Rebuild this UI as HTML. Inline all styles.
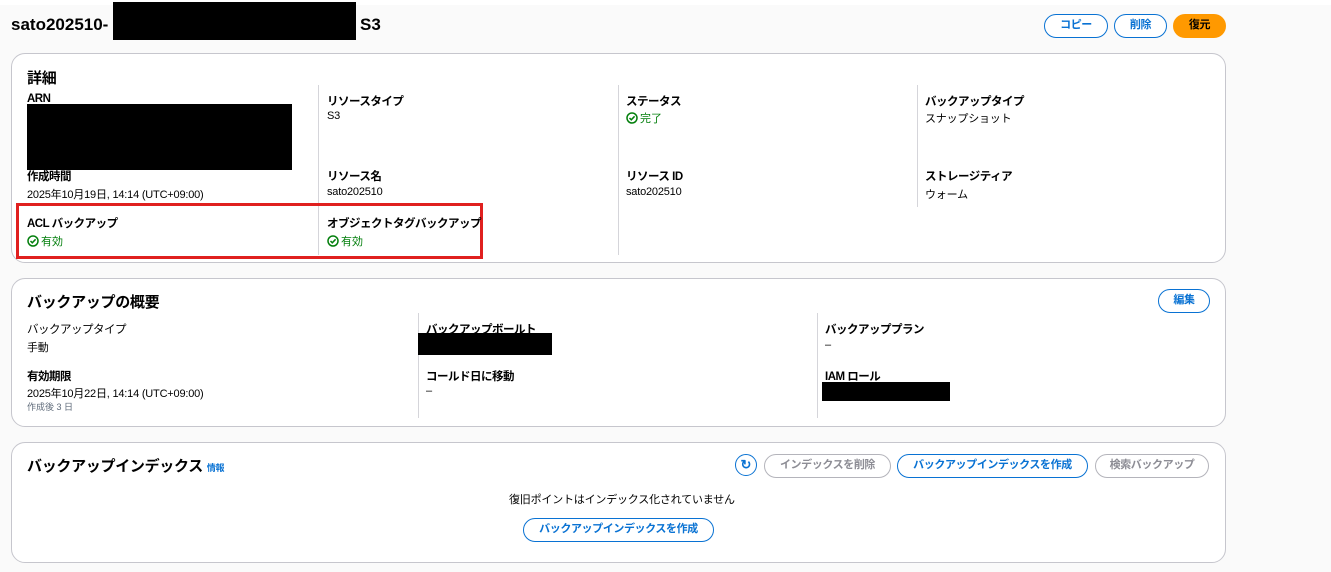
<!DOCTYPE html>
<html><head><meta charset="utf-8"><style>
*{margin:0;padding:0;box-sizing:border-box}
body{width:1331px;height:572px;background:#fff;font-family:"Liberation Sans","Noto Sans CJK JP",sans-serif;color:#000;position:relative;overflow:hidden}
.bg{position:absolute;left:0;top:5px;width:1331px;height:567px;background:#fafafa}
.a{position:absolute;white-space:nowrap}
.panel{position:absolute;left:11px;width:1215px;background:#fff;border:1px solid #c6c6cd;border-radius:14px}
.h{font-size:15px;font-weight:bold;letter-spacing:-0.3px}
.l{font-size:11.5px;font-weight:bold;letter-spacing:-0.5px}
.v{font-size:11px;letter-spacing:-0.2px}
.vl{position:absolute;width:1px;background:#d5d5da}
.btn{position:absolute;height:24px;border:1.5px solid #0972d3;border-radius:12px;color:#0972d3;font-size:11px;font-weight:bold;text-align:center;line-height:21px;background:#fff;letter-spacing:-0.4px}
.dis{border-color:#b4b4bb;color:#8d8d95}
.blk{position:absolute;background:#000}
.ok{color:#037f0c;font-size:11px}
.ok svg{vertical-align:-2px;margin-right:2px}
</style></head><body>
<div class="bg"></div>
<div class="a" style="left:11px;top:15px;font-size:17px;font-weight:bold">sato202510-</div>
<div class="blk" style="left:113px;top:2px;width:243px;height:38px"></div>
<div class="a" style="left:360px;top:15px;font-size:17px;font-weight:bold">S3</div>
<div class="btn" style="left:1044px;top:14px;width:64px">コピー</div>
<div class="btn" style="left:1114px;top:14px;width:53px">削除</div>
<div class="btn" style="left:1173px;top:14px;width:53px;background:#ff9900;border-color:#ff9900;color:#000">復元</div>

<div class="panel" style="top:53px;height:210px"></div>
<div class="a h" style="left:27px;top:67px">詳細</div>
<div class="vl" style="left:318px;top:85px;height:170px"></div>
<div class="vl" style="left:618px;top:85px;height:170px"></div>
<div class="vl" style="left:917px;top:85px;height:122px"></div>
<div class="a l" style="left:27px;top:93px">ARN</div>
<div class="blk" style="left:27px;top:104px;width:265px;height:66px"></div>
<div class="a l" style="left:27px;top:168px">作成時間</div>
<div class="a v" style="left:27px;top:186px">2025年10月19日, 14:14 (UTC+09:00)</div>
<div class="a l" style="left:327px;top:93px">リソースタイプ</div>
<div class="a v" style="left:327px;top:110px">S3</div>
<div class="a l" style="left:327px;top:168px">リソース名</div>
<div class="a v" style="left:327px;top:186px">sato202510</div>
<div class="a l" style="left:626px;top:93px">ステータス</div>
<div class="a ok" style="left:626px;top:110px"><svg width="12" height="12" viewBox="0 0 12 12"><circle cx="6" cy="6" r="5" fill="none" stroke="#037f0c" stroke-width="1.5"/><path d="M3.5 6l1.8 1.8L8.6 4.3" fill="none" stroke="#037f0c" stroke-width="1.5"/></svg>完了</div>
<div class="a l" style="left:626px;top:168px">リソース ID</div>
<div class="a v" style="left:626px;top:186px">sato202510</div>
<div class="a l" style="left:925px;top:93px">バックアップタイプ</div>
<div class="a v" style="left:925px;top:110px">スナップショット</div>
<div class="a l" style="left:925px;top:168px">ストレージティア</div>
<div class="a v" style="left:925px;top:186px">ウォーム</div>
<div style="position:absolute;left:16px;top:203px;width:467px;height:56px;border:3px solid #e0201f"></div>
<div class="a l" style="left:27px;top:215px">ACL バックアップ</div>
<div class="a ok" style="left:27px;top:233px"><svg width="12" height="12" viewBox="0 0 12 12"><circle cx="6" cy="6" r="5" fill="none" stroke="#037f0c" stroke-width="1.5"/><path d="M3.5 6l1.8 1.8L8.6 4.3" fill="none" stroke="#037f0c" stroke-width="1.5"/></svg>有効</div>
<div class="a l" style="left:327px;top:215px">オブジェクトタグバックアップ</div>
<div class="a ok" style="left:327px;top:233px"><svg width="12" height="12" viewBox="0 0 12 12"><circle cx="6" cy="6" r="5" fill="none" stroke="#037f0c" stroke-width="1.5"/><path d="M3.5 6l1.8 1.8L8.6 4.3" fill="none" stroke="#037f0c" stroke-width="1.5"/></svg>有効</div>

<div class="panel" style="top:278px;height:149px"></div>
<div class="a h" style="left:27px;top:291px">バックアップの概要</div>
<div class="btn" style="left:1158px;top:289px;width:52px">編集</div>
<div class="vl" style="left:418px;top:313px;height:105px"></div>
<div class="vl" style="left:817px;top:313px;height:105px"></div>
<div class="a l" style="left:27px;top:321px;font-weight:normal">バックアップタイプ</div>
<div class="a v" style="left:27px;top:339px">手動</div>
<div class="a l" style="left:27px;top:368px">有効期限</div>
<div class="a v" style="left:27px;top:385px">2025年10月22日, 14:14 (UTC+09:00)</div>
<div class="a" style="left:27px;top:400px;font-size:9px;color:#5f6b7a">作成後 3 日</div>
<div class="a l" style="left:426px;top:321px">バックアップボールト</div>
<div class="blk" style="left:418px;top:333px;width:134px;height:22px"></div>
<div class="a l" style="left:426px;top:368px">コールド日に移動</div>
<div class="a v" style="left:426px;top:385px">–</div>
<div class="a l" style="left:825px;top:321px">バックアッププラン</div>
<div class="a v" style="left:825px;top:339px">–</div>
<div class="a l" style="left:825px;top:368px">IAM ロール</div>
<div class="blk" style="left:822px;top:382px;width:128px;height:19px"></div>

<div class="panel" style="top:442px;height:121px"></div>
<div class="a h" style="left:27px;top:455px">バックアップインデックス <span style="font-size:9px;color:#0972d3">情報</span></div>
<div style="position:absolute;left:735px;top:454px;width:22px;height:22px;border:1.5px solid #0972d3;border-radius:50%;color:#0972d3;font-size:13px;font-weight:bold;text-align:center;line-height:19px">↻</div>
<div class="btn dis" style="left:764px;top:454px;width:127px">インデックスを削除</div>
<div class="btn" style="left:897px;top:454px;width:191px">バックアップインデックスを作成</div>
<div class="btn dis" style="left:1095px;top:454px;width:114px">検索バックアップ</div>
<div class="a v" style="left:509px;top:491px">復旧ポイントはインデックス化されていません</div>
<div class="btn" style="left:523px;top:518px;width:191px">バックアップインデックスを作成</div>
</body></html>
